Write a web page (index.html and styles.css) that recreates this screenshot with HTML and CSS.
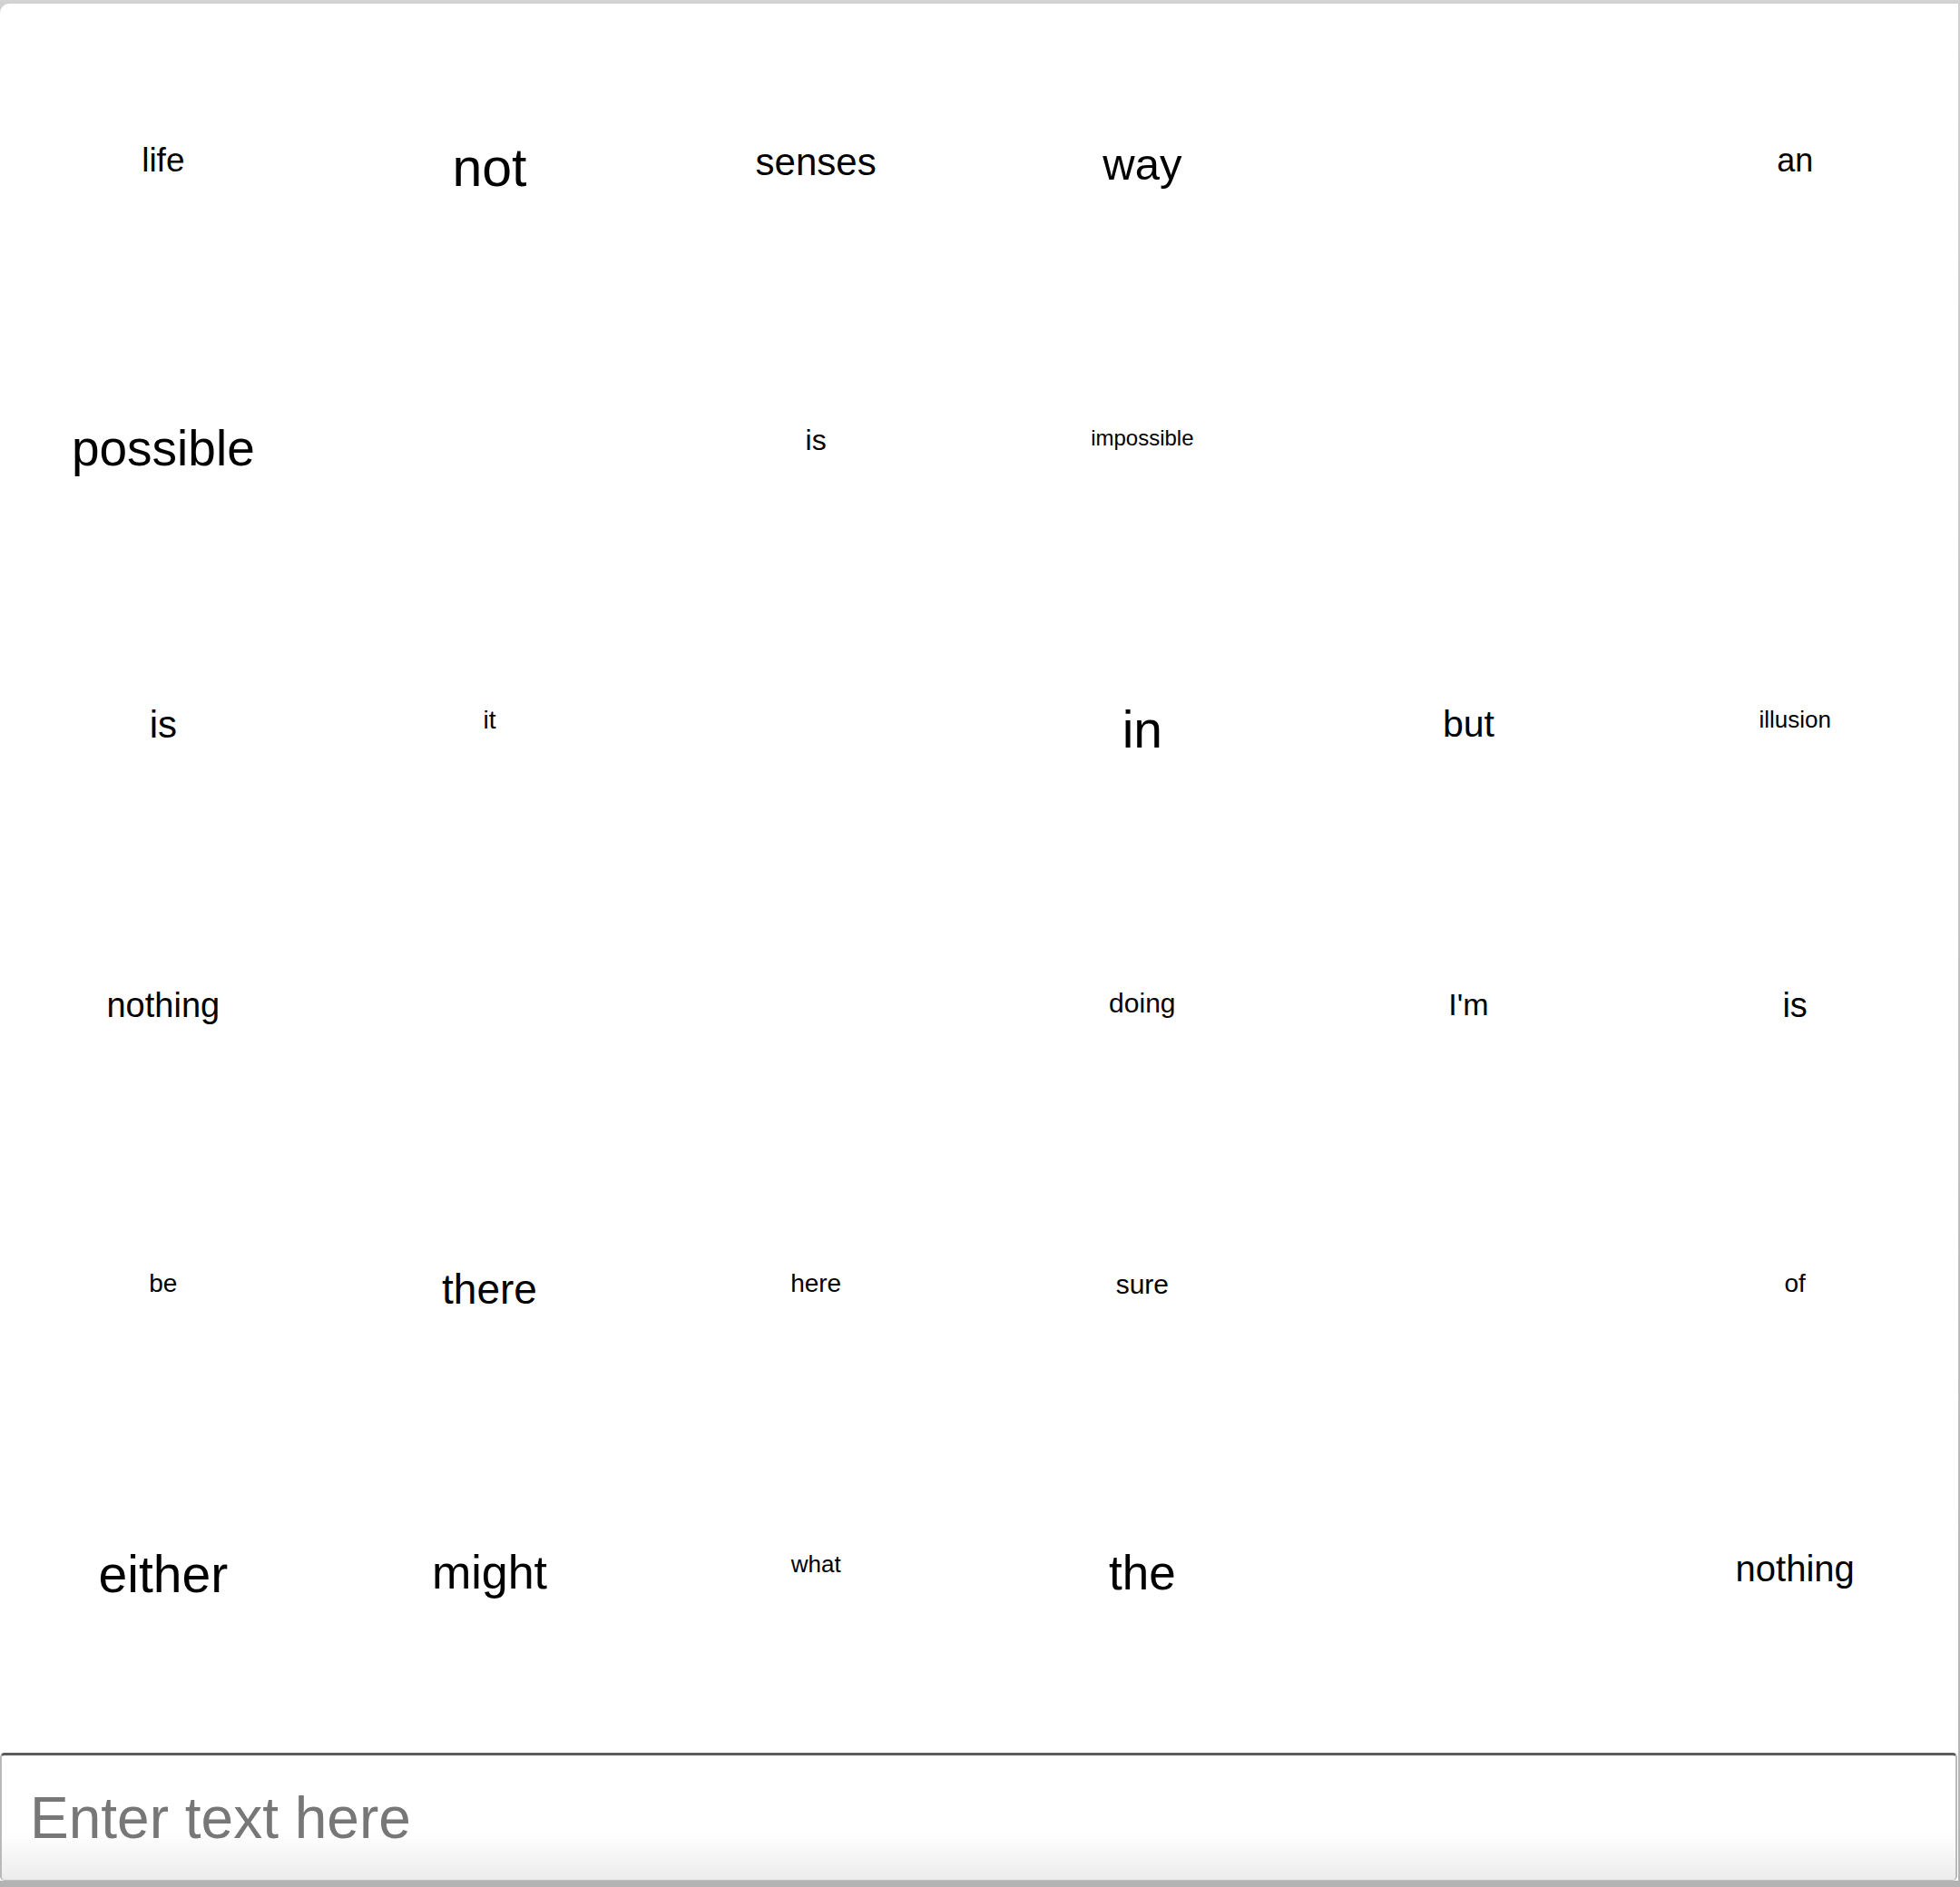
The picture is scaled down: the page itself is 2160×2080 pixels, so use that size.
FILE: index.html
```html
<!DOCTYPE html>
<html>
<head>
<meta charset="utf-8">
<link rel="stylesheet" href="styles.css">
</head>
<body>
<div class="window">
  <div class="board">
    <div class="cell"><span class="w f37">life</span></div>
    <div class="cell"><span class="w f59">not</span></div>
    <div class="cell"><span class="w f42">senses</span></div>
    <div class="cell"><span class="w f49">way</span></div>
    <div class="cell"></div>
    <div class="cell"><span class="w f36">an</span></div>

    <div class="cell"><span class="w f55">possible</span></div>
    <div class="cell"></div>
    <div class="cell"><span class="w f32">is</span></div>
    <div class="cell"><span class="w f24">impossible</span></div>
    <div class="cell"></div>
    <div class="cell"></div>

    <div class="cell"><span class="w f42">is</span></div>
    <div class="cell"><span class="w f28">it</span></div>
    <div class="cell"></div>
    <div class="cell"><span class="w f57">in</span></div>
    <div class="cell"><span class="w f41">but</span></div>
    <div class="cell"><span class="w f26">illusion</span></div>

    <div class="cell"><span class="w f38">nothing</span></div>
    <div class="cell"></div>
    <div class="cell"></div>
    <div class="cell"><span class="w f30">doing</span></div>
    <div class="cell"><span class="w f34">I'm</span></div>
    <div class="cell"><span class="w f38">is</span></div>

    <div class="cell"><span class="w f28">be</span></div>
    <div class="cell"><span class="w f46">there</span></div>
    <div class="cell"><span class="w f28">here</span></div>
    <div class="cell"><span class="w f30">sure</span></div>
    <div class="cell"></div>
    <div class="cell"><span class="w f28">of</span></div>

    <div class="cell"><span class="w f57">either</span></div>
    <div class="cell"><span class="w f52">might</span></div>
    <div class="cell"><span class="w f26">what</span></div>
    <div class="cell"><span class="w f53">the</span></div>
    <div class="cell"></div>
    <div class="cell"><span class="w f40">nothing</span></div>
  </div>
  <input class="entry" type="text" placeholder="Enter text here">
</div>
</body>
</html>
```

FILE: styles.css
```css
html, body {
  margin: 0;
  padding: 0;
}
body {
  width: 2160px;
  height: 2080px;
  overflow: hidden;
  background: linear-gradient(to bottom, #d4d4d4 0, #d0d0d0 4px, #c2c2c2 1000px, #b3b3b3 2080px);
  font-family: "Liberation Sans", Arial, sans-serif;
}
.window {
  margin-top: 4px;
  width: 2158px;
  height: 2069px;
  background: #ffffff;
  border-top-left-radius: 10px;
  display: flex;
  flex-direction: column;
}
.board {
  box-sizing: border-box;
  height: 1928px;
  padding-top: 160px;
  display: grid;
  grid-template-columns: repeat(6, 1fr);
  grid-template-rows: repeat(5, 310.2px) 1fr;
  overflow: hidden;
}
.cell {
  text-align: center;
  color: #000;
}
.w {
  display: block;
  white-space: nowrap;
  line-height: 0.727;
}
.f24 { font-size: 24px; }
.f26 { font-size: 26px; }
.f28 { font-size: 28px; }
.f30 { font-size: 30px; }
.f32 { font-size: 32px; }
.f34 { font-size: 34px; }
.f36 { font-size: 36px; }
.f37 { font-size: 37px; }
.f38 { font-size: 38px; }
.f40 { font-size: 40px; }
.f41 { font-size: 41px; }
.f42 { font-size: 42px; }
.f46 { font-size: 46px; }
.f49 { font-size: 49px; }
.f52 { font-size: 52px; }
.f53 { font-size: 53px; }
.f55 { font-size: 55px; }
.f57 { font-size: 57px; }
.f59 { font-size: 59px; }

.entry {
  box-sizing: border-box;
  display: block;
  width: 2157px;
  height: 141px;
  margin: 0;
  padding: 0 0 0 31px;
  border-style: solid;
  border-width: 3px 2px 1px 2px;
  border-color: #5c5c5c #b9b9b9 #c4c4c4 #b9b9b9;
  border-radius: 5px;
  background: linear-gradient(to bottom, #ffffff 0%, #ffffff 62%, #ececec 100%);
  font-family: "Liberation Sans", Arial, sans-serif;
  font-size: 64px;
  color: #222;
  outline: none;
}
.entry::placeholder {
  color: #777777;
  opacity: 1;
}
```
